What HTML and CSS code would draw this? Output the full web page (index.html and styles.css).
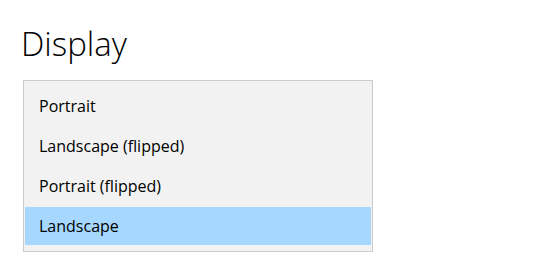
FILE: index.html
```html
<!DOCTYPE html>
<html>
<head>
<meta charset="utf-8">
<link rel="stylesheet" href="styles.css">
</head>
<body>
<div class="page">
  <h1 class="title">Display</h1>
  <ul class="menu">
    <li class="item">Portrait</li>
    <li class="item">Landscape (flipped)</li>
    <li class="item">Portrait (flipped)</li>
    <li class="item selected">Landscape</li>
  </ul>
</div>
</body>
</html>
```
FILE: styles.css
```css
html, body {
  margin: 0;
  padding: 0;
  background: #ffffff;
}
.page {
  padding: 22px 0 0 23px;
  font-family: "Open Sans", "Noto Sans", sans-serif;
  color: #000;
}
.title {
  margin: 0 0 14px -2px;
  font-size: 33px;
  font-weight: 300;
  line-height: 44px;
}
.menu {
  list-style: none;
  margin: 0;
  width: 346px;
  padding: 5px 1px;
  background: #f2f2f2;
  border: 1px solid #cccccc;
}
.item {
  height: 40px;
  line-height: 41px;
  padding-left: 14px;
  font-size: 16px;
}
.selected {
  background: #a6d8ff;
  height: 38px;
  line-height: 39px;
  margin-top: 1px;
  margin-bottom: 1px;
}
```
